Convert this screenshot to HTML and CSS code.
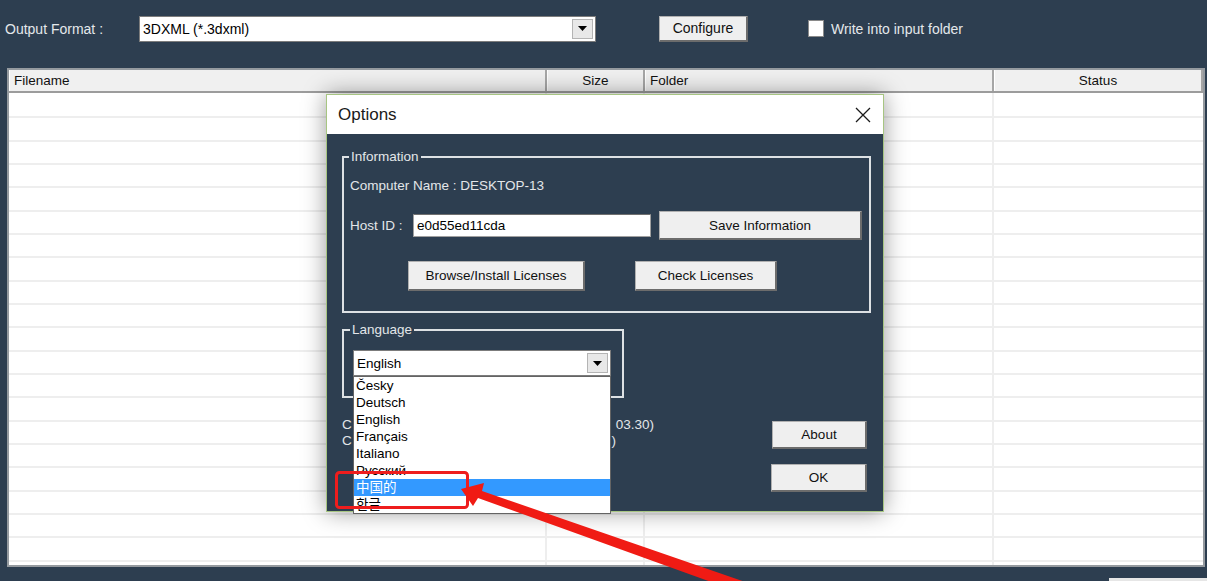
FILE: index.html
```html
<!DOCTYPE html>
<html lang="en">
<head>
    <meta charset="UTF-8">
    <title>Converter - Options</title>
    <link rel="stylesheet" href="styles.css">
</head>
<body>
    <div class="toolbar">
        <span class="tb-label">Output Format :</span>
        <div class="combo format-combo">
            <span class="combo-text">3DXML (*.3dxml)</span>
            <span class="combo-btn"><svg width="9" height="5" viewBox="0 0 9 5"><path d="M0 0h9L4.5 5z" fill="#000"/></svg></span>
        </div>
        <button class="btn configure">Configure</button>
        <label class="check"><span class="box"></span>Write into input folder</label>
    </div>

    <div class="grid">
        <div class="grid-head">
            <div class="col c-file">Filename</div>
            <div class="col c-size">Size</div>
            <div class="col c-folder">Folder</div>
            <div class="col c-status">Status</div>
        </div>
        <div class="grid-body">
            <div class="cell c-file"></div>
            <div class="cell c-size"></div>
            <div class="cell c-folder"></div>
            <div class="cell c-status"></div>
        </div>
    </div>
    <div class="footer"><div class="footer-btn"></div></div>

    <div class="dialog">
        <div class="dlg-title">
            <span>Options</span>
            <svg class="close" width="16" height="16" viewBox="0 0 16 16"><path d="M1 1L15 15M15 1L1 15" stroke="#1a1a1a" stroke-width="1.3"/></svg>
        </div>
        <div class="dlg-body">
            <fieldset class="info">
                <legend>Information</legend>
                <div class="pc-name">Computer Name : DESKTOP-13</div>
                <div class="host-row">
                    <span class="host-label">Host ID :</span>
                    <div class="host-input">e0d55ed11cda</div>
                    <button class="btn save">Save Information</button>
                </div>
                <div class="lic-row">
                    <button class="btn browse">Browse/Install Licenses</button>
                    <button class="btn check-lic">Check Licenses</button>
                </div>
            </fieldset>

            <div class="lower">
                <div class="lower-left">
                    <fieldset class="lang">
                        <legend>Language</legend>
                        <div class="combo lang-select">
                            <span class="combo-text">English</span>
                            <span class="combo-btn"><svg width="9" height="5" viewBox="0 0 9 5"><path d="M0 0h9L4.5 5z" fill="#000"/></svg></span>
                            <ul class="dropdown-list">
                                <li>Česky</li>
                                <li>Deutsch</li>
                                <li>English</li>
                                <li>Français</li>
                                <li>Italiano</li>
                                <li>Русский</li>
                                <li class="selected">中国的</li>
                                <li>한글</li>
                            </ul>
                        </div>
                    </fieldset>
                    <!-- the middle of these two lines is hidden by the open list -->
                    <div class="version">
                        <div class="v-line"><span>C</span><span>03.30)</span></div>
                        <div class="v-line short"><span>C</span><span>)</span></div>
                    </div>
                </div>
                <div class="side">
                    <button class="btn about">About</button>
                    <button class="btn ok">OK</button>
                </div>
            </div>
        </div>
    </div>

    <svg class="annot" width="1207" height="581" viewBox="0 0 1207 581">
        <rect x="336.5" y="472.5" width="131" height="35" rx="3" fill="none" stroke="#ee1d1d" stroke-width="3"/>
        <polygon points="461,489 484,483 482,491 780,594 775,605 478,498 473,506" fill="#f01b14"/>
    </svg>
</body>
</html>
```

FILE: styles.css
```css
* {
    box-sizing: border-box;
}
body {
    margin: 0;
    height: 581px;
    overflow: hidden;
    position: relative;
    background-color: #2d3e50;
    font-family: "Liberation Sans", Arial, "Noto Sans CJK SC", sans-serif;
    font-size: 13.5px;
}
.toolbar {
    display: flex;
    align-items: center;
    height: 68px;
    padding: 0 0 11px 5px;
    font-size: 14px;
}
.tb-label {
    width: 134px;
    color: #e4e8eb;
}
.combo {
    display: flex;
    background-color: #ffffff;
    border: 1px solid #7c7c7c;
    height: 26px;
}
.format-combo {
    width: 457px;
}
.combo-text {
    flex: 1;
    display: flex;
    align-items: center;
    padding-left: 3px;
    color: #000000;
}
.combo-btn {
    width: 21px;
    margin: 2px;
    background-color: #e8e8e8;
    border: 1px solid #b4b4b4;
    display: flex;
    align-items: center;
    justify-content: center;
}
.btn {
    font: inherit;
    color: #111111;
    background-color: #efefef;
    border: 1px solid #b0b0b0;
    border-right: 2px solid #6c6c6c;
    border-bottom: 2px solid #6c6c6c;
    padding: 0;
}
.configure {
    width: 89px;
    height: 26px;
    margin-left: 63px;
}
.check {
    display: flex;
    align-items: center;
    margin-left: 60px;
    color: #e4e8eb;
}
.check .box {
    width: 16px;
    height: 17px;
    background-color: #ffffff;
    border: 1px solid #8a8a8a;
    margin-right: 7px;
}

/* file list */
.grid {
    margin: 0 2px 0 7px;
    height: 499px;
    border: 2px solid #959a9f;
    background-color: #ffffff;
    display: flex;
    flex-direction: column;
    font-size: 13.5px;
}
.grid-head {
    display: flex;
    height: 23px;
    background-color: #f0f0f0;
    border-bottom: 2px solid #9c9c9c;
}
.grid-head .col {
    border-left: 1px solid #ffffff;
    border-right: 2px solid #a6a6a6;
    padding: 0 4px;
    line-height: 21px;
    color: #111111;
}
.c-file {
    width: 538px;
}
.c-size {
    width: 98px;
    text-align: center;
}
.c-folder {
    width: 349px;
}
.c-status {
    flex: 1;
    text-align: center;
}
.grid-body {
    flex: 1;
    display: flex;
    background: repeating-linear-gradient(to bottom, #ffffff 0, #ffffff 21.33px, #eeeeee 21.33px, #eeeeee 23.33px);
    background-position: 0 2px;
}
.grid-body .cell {
    border-right: 2px solid #eeeeee;
}
.grid-body .c-status {
    border-right: none;
}
.footer {
    display: flex;
    justify-content: flex-end;
    margin-top: 11px;
}
.footer-btn {
    width: 98px;
    height: 20px;
    background-color: #e6e6e6;
}

/* options dialog */
.dialog {
    position: absolute;
    left: 326px;
    top: 94px;
    width: 558px;
    height: 418px;
    border: 1px solid #a7c582;
    background-color: #2d3e50;
    box-shadow: 0 0 22px rgba(0, 0, 0, 0.4);
    display: flex;
    flex-direction: column;
}
.dlg-title {
    height: 39px;
    flex-shrink: 0;
    background-color: #ffffff;
    display: flex;
    align-items: center;
    justify-content: space-between;
    padding: 0 12px 0 11px;
    font-size: 17px;
    color: #1a1a1a;
}
.dlg-body {
    flex: 1;
    padding: 15px 12px 0 15px;
    color: #e3e6e9;
}
fieldset {
    margin: 0;
    min-width: 0;
    border: 2px solid #dde1e4;
}
legend {
    line-height: 15px;
    padding: 0 2px;
}
.info {
    padding: 0 6px 20px 6px;
}
.info legend {
    margin-left: -1px;
}
.pc-name {
    margin-top: 14px;
    line-height: 16px;
}
.host-row {
    display: flex;
    align-items: center;
    height: 29px;
    margin-top: 17px;
}
.host-label {
    width: 63px;
}
.host-input {
    width: 238px;
    height: 23px;
    background-color: #ffffff;
    border: 1px solid #a0a0a0;
    border-top-color: #6f6f6f;
    color: #000000;
    padding-left: 3px;
    line-height: 21px;
}
.save {
    width: 203px;
    height: 29px;
    margin-left: 8px;
}
.lic-row {
    display: flex;
    gap: 50px;
    margin-top: 21px;
    padding-left: 58px;
}
.browse {
    width: 177px;
    height: 30px;
}
.check-lic {
    width: 142px;
    height: 30px;
}
.lower {
    display: flex;
    margin-top: 9px;
}
.lang {
    width: 282px;
    padding: 0 0 20px 9px;
}
.lang legend {
    margin-left: -3px;
}
.lang-select {
    position: relative;
    width: 258px;
    margin-top: 13px;
}
.dropdown-list {
    position: absolute;
    left: -1px;
    top: 25px;
    width: 258px;
    margin: 0;
    padding: 0;
    list-style: none;
    background-color: #ffffff;
    border: 1px solid #646464;
    z-index: 2;
}
.dropdown-list li {
    height: 17px;
    line-height: 17px;
    padding-left: 2px;
    color: #000000;
}
.dropdown-list li.selected {
    background-color: #3399ff;
    color: #ffffff;
}
.version {
    margin-top: 19px;
    width: 312px;
}
.v-line {
    display: flex;
    justify-content: space-between;
    line-height: 16px;
}
.v-line.short {
    width: 274px;
}
.side {
    margin-left: auto;
    margin-right: 4px;
    padding-top: 99px;
    display: flex;
    flex-direction: column;
    align-items: flex-end;
}
.about {
    width: 95px;
    height: 28px;
}
.ok {
    width: 96px;
    height: 28px;
    margin-top: 15px;
}
.annot {
    position: absolute;
    left: 0;
    top: 0;
    pointer-events: none;
    z-index: 5;
}
```
